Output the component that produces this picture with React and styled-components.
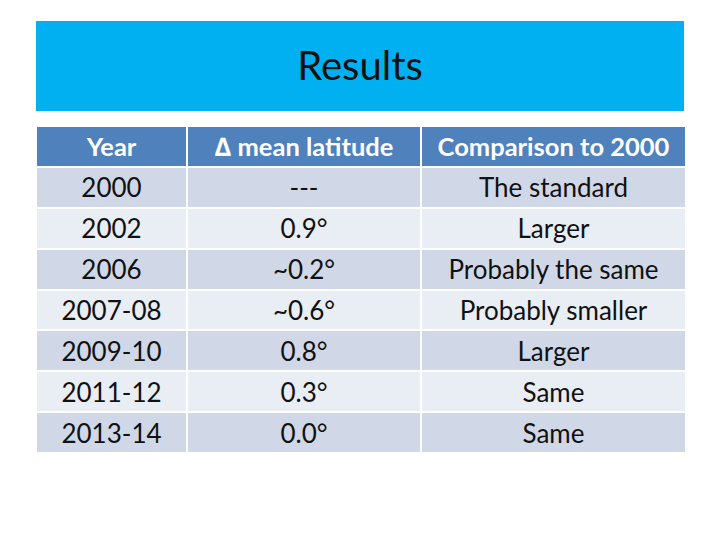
import React from 'react';
import styled, { createGlobalStyle } from 'styled-components';

const GlobalStyle = createGlobalStyle`
  body {
    margin: 0;
    background: #ffffff;
    font-family: Lato, "Open Sans", sans-serif;
  }
`;

const Slide = styled.div`
  width: 720px;
  height: 540px;
  padding: 21px 36px 0;
  box-sizing: border-box;
  display: flex;
  flex-direction: column;
  gap: 14px;
`;

const TitleBar = styled.div`
  height: 90px;
  background: #00b0f0;
  display: flex;
  align-items: center;
  justify-content: center;
  font-size: 40px;
  color: #111;
  padding-bottom: 2px;
  box-sizing: border-box;
`;

const Table = styled.table`
  width: 650px;
  margin-left: -1px;
  border-collapse: collapse;
  table-layout: fixed;
`;

const TH = styled.th`
  background: #4f81bd;
  color: #ffffff;
  font-weight: 700;
  font-size: 25.5px;
  height: 38.9px;
  padding: 0;
  border: 2px solid #ffffff;
  text-align: center;
`;

const TD = styled.td`
  background: ${p => (p.$odd ? '#d0d8e8' : '#e9edf4')};
  color: #111;
  font-size: 26px;
  height: 38.9px;
  padding: 0;
  border: 2px solid #ffffff;
  text-align: center;
`;

const rows = [
  ['2000', '---', 'The standard'],
  ['2002', '0.9°', 'Larger'],
  ['2006', '~0.2°', 'Probably the same'],
  ['2007-08', '~0.6°', 'Probably smaller'],
  ['2009-10', '0.8°', 'Larger'],
  ['2011-12', '0.3°', 'Same'],
  ['2013-14', '0.0°', 'Same'],
];

const App = () => (
  <Slide>
    <GlobalStyle />
    <TitleBar>Results</TitleBar>
    <Table>
      <colgroup>
        <col style={{ width: 151 }} />
        <col style={{ width: 234 }} />
        <col style={{ width: 265 }} />
      </colgroup>
      <thead>
        <tr>
          <TH>Year</TH>
          <TH>∆ mean latitude</TH>
          <TH>Comparison to 2000</TH>
        </tr>
      </thead>
      <tbody>
        {rows.map((row, i) => (
          <tr key={i}>
            {row.map((cell, j) => (
              <TD key={j} $odd={i % 2 === 0}>{cell}</TD>
            ))}
          </tr>
        ))}
      </tbody>
    </Table>
  </Slide>
);

export default App;
